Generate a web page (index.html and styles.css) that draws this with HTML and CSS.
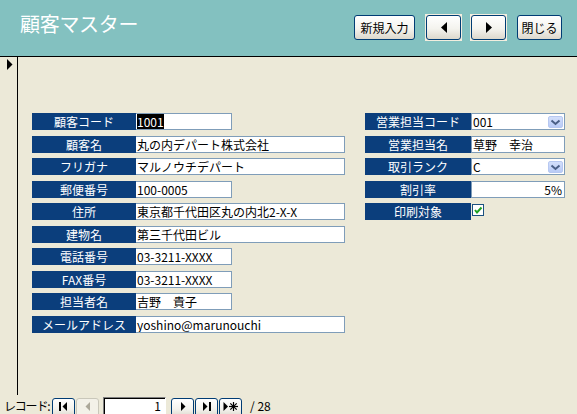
FILE: index.html
```html
<!DOCTYPE html>
<html lang="ja">
<head>
<meta charset="utf-8">
<title>顧客マスター</title>
<link rel="stylesheet" href="styles.css">
</head>
<body>
<div class="window">
  <header class="header">
    <h1 class="title">顧客マスター</h1>
    <div class="actions">
      <button class="btn btn-new">新規入力</button>
      <span class="btn-frame"><button class="btn btn-arrow"><svg width="8" height="11" viewBox="0 0 8 11"><polygon points="7,0 1,5.5 7,11" fill="#000"/></svg></button></span>
      <span class="btn-frame"><button class="btn btn-arrow"><svg width="8" height="11" viewBox="0 0 8 11"><polygon points="1,0 7,5.5 1,11" fill="#000"/></svg></button></span>
      <button class="btn btn-close">閉じる</button>
    </div>
  </header>

  <main class="main">
    <div class="selector">
      <svg class="selector-arrow" width="6" height="11" viewBox="0 0 6 11"><polygon points="0,0 5.5,5.5 0,11" fill="#000"/></svg>
    </div>
    <div class="form">
      <div class="col col-left">
        <div class="row"><span class="label">顧客コード</span><span class="field short"><span class="selected">1001</span></span></div>
        <div class="row"><span class="label">顧客名</span><span class="field long">丸の内デパート株式会社</span></div>
        <div class="row"><span class="label">フリガナ</span><span class="field long">マルノウチデパート</span></div>
        <div class="row"><span class="label">郵便番号</span><span class="field short">100-0005</span></div>
        <div class="row"><span class="label">住所</span><span class="field long">東京都千代田区丸の内北2-X-X</span></div>
        <div class="row"><span class="label">建物名</span><span class="field long">第三千代田ビル</span></div>
        <div class="row"><span class="label">電話番号</span><span class="field short">03-3211-XXXX</span></div>
        <div class="row"><span class="label">FAX番号</span><span class="field short">03-3211-XXXX</span></div>
        <div class="row"><span class="label">担当者名</span><span class="field short">吉野　貴子</span></div>
        <div class="row"><span class="label">メールアドレス</span><span class="field long">yoshino@marunouchi</span></div>
      </div>
      <div class="col col-right">
        <div class="row"><span class="label">営業担当コード</span><span class="field combo"><span class="combo-text">001</span><span class="drop"><svg width="11" height="7" viewBox="0 0 11 7"><polyline points="1.5,1.5 5.5,5 9.5,1.5" fill="none" stroke="#4A5F86" stroke-width="2"/></svg></span></span></div>
        <div class="row"><span class="label">営業担当名</span><span class="field combo">草野　幸治</span></div>
        <div class="row"><span class="label">取引ランク</span><span class="field combo"><span class="combo-text">C</span><span class="drop"><svg width="11" height="7" viewBox="0 0 11 7"><polyline points="1.5,1.5 5.5,5 9.5,1.5" fill="none" stroke="#4A5F86" stroke-width="2"/></svg></span></span></div>
        <div class="row"><span class="label">割引率</span><span class="field combo number">5%</span></div>
        <div class="row"><span class="label">印刷対象</span><span class="checkbox"><svg width="10" height="10" viewBox="0 0 10 10"><polyline points="2,5 4,7.5 8.5,2.5" fill="none" stroke="#21A121" stroke-width="2"/></svg></span></div>
      </div>
    </div>
  </main>

  <footer class="nav">
    <span class="nav-label">レコード:</span>
    <button class="nbtn"><svg width="9" height="9" viewBox="0 0 9 9"><rect x="0" y="0" width="2" height="9" fill="#000"/><polygon points="8,0 3.5,4.5 8,9" fill="#000"/></svg></button>
    <button class="nbtn disabled"><svg width="6" height="9" viewBox="0 0 6 9"><polygon points="5,0 0.5,4.5 5,9" fill="#ACA899"/></svg></button>
    <span class="nav-input">1</span>
    <button class="nbtn"><svg width="6" height="9" viewBox="0 0 6 9"><polygon points="1,0 5.5,4.5 1,9" fill="#000"/></svg></button>
    <button class="nbtn"><svg width="9" height="9" viewBox="0 0 9 9"><polygon points="1,0 5.5,4.5 1,9" fill="#000"/><rect x="7" y="0" width="2" height="9" fill="#000"/></svg></button>
    <button class="nbtn"><svg width="15" height="9" viewBox="0 0 15 9"><polygon points="0.5,0 5,4.5 0.5,9" fill="#000"/><g stroke="#000" stroke-width="1.2"><line x1="10.5" y1="0" x2="10.5" y2="9"/><line x1="6" y1="4.5" x2="15" y2="4.5"/><line x1="7.3" y1="1.3" x2="13.7" y2="7.7"/><line x1="13.7" y1="1.3" x2="7.3" y2="7.7"/></g></svg></button>
    <span class="nav-total">/ 28</span>
  </footer>
</div>
</body>
</html>
```

FILE: styles.css
```css
html, body {
  margin: 0;
  padding: 0;
}

body {
  background: #ECE9D8;
  font-family: "Noto Sans CJK JP", "Noto Sans", sans-serif;
  font-size: 12px;
  color: #000;
  width: 577px;
  height: 414px;
  overflow: hidden;
}

.window {
  display: flex;
  flex-direction: column;
  width: 577px;
  height: 414px;
}

/* Header */
.header {
  height: 56px;
  flex: none;
  background: #83C1C0;
  border-bottom: 1px solid #000;
  display: flex;
  align-items: flex-start;
  padding: 0 15px 0 20px;
}

.title {
  margin: 0;
  padding-top: 10px;
  font-size: 20px;
  font-weight: normal;
  line-height: 28px;
  color: #fff;
  letter-spacing: -0.3px;
}

.actions {
  margin-left: auto;
  display: flex;
  align-items: flex-start;
  gap: 8px;
  padding-top: 15px;
}

.btn {
  height: 25px;
  box-sizing: border-box;
  border: 1px solid #003C74;
  border-radius: 3px;
  background: linear-gradient(#FFFFFF, #F4F3EE 55%, #DCD8CC);
  font-family: inherit;
  font-size: 12px;
  color: #000;
  padding: 0;
  display: flex;
  align-items: center;
  justify-content: center;
  cursor: default;
}

.btn-new { width: 61px; margin-right: 2px; }
.btn-close { width: 45px; margin-left: 2px; }

.btn-frame {
  display: flex;
  padding: 1px;
  margin-top: -1px;
  background: #F3EEDF;
}

.btn-arrow { width: 35px; }

/* Main area */
.main {
  display: flex;
  height: 340px;
  flex: none;
}

.selector {
  width: 17px;
  height: 338px;
  border-right: 1px solid #000;
  flex: none;
}

.selector-arrow {
  display: block;
  margin: 2px 0 0 7px;
}

.form {
  display: flex;
  gap: 20px;
  padding: 56px 0 0 14px;
}

.col {
  display: grid;
  row-gap: 5.5px;
  align-content: start;
}

.row {
  display: flex;
  height: 17px;
}

.label {
  width: 104px;
  flex: none;
  background: #0B3E7C;
  color: #fff;
  text-align: center;
  line-height: 17px;
  white-space: nowrap;
}

.col-right .label { width: 106px; }

.field {
  box-sizing: border-box;
  height: 17px;
  background: #fff;
  border: 1px solid #7F9DB9;
  border-left: none;
  line-height: 15px;
  padding-left: 1px;
  white-space: nowrap;
  overflow: hidden;
}

.short { width: 96px; }
.long { width: 209px; }
.combo {
  width: 94px;
  display: flex;
  align-items: center;
  border-left: 1px solid #7F9DB9;
}

.combo-text { flex: 1; }

.number {
  justify-content: flex-end;
  padding-right: 2px;
}

.selected {
  background: #000;
  color: #fff;
}

.drop {
  width: 15px;
  height: 12px;
  margin: 1px 1px 0 0;
  box-sizing: border-box;
  border: 1px solid #B7C8F1;
  border-radius: 2px;
  background: linear-gradient(#D3DFFB, #B9CBF6);
  display: flex;
  align-items: center;
  justify-content: center;
}

.checkbox {
  width: 12px;
  height: 12px;
  box-sizing: border-box;
  margin: 1px 0 0 1px;
  border: 1px solid #1C5180;
  background: #fff;
  display: flex;
  align-items: center;
  justify-content: center;
}

/* Bottom navigation */
.nav {
  height: 17px;
  flex: none;
  display: flex;
  align-items: flex-start;
  padding-left: 4px;
}

.nav-label {
  line-height: 17px;
  width: 48px;
  flex: none;
  white-space: nowrap;
  letter-spacing: -1.2px;
}

.nbtn {
  width: 23px;
  height: 20px;
  margin-top: 1px;
  margin-right: 1px;
  box-sizing: border-box;
  border: 1px solid #003C74;
  border-radius: 3px;
  background: linear-gradient(#FFFFFF, #F4F3EE 55%, #DCD8CC);
  padding: 0 0 3px 0;
  display: flex;
  align-items: center;
  justify-content: center;
}

.nbtn.disabled {
  border-color: #C9C7BA;
  background: #F3F1E8;
}

.nav-input {
  box-sizing: border-box;
  width: 63px;
  height: 20px;
  margin: 0 5px 0 3px;
  background: #fff;
  border: 1px solid;
  border-color: #808080 #fff #fff #808080;
  box-shadow: inset 1px 1px 0 #000;
  text-align: right;
  padding-right: 4px;
  line-height: 16px;
}

.nav-total {
  margin-left: 7px;
  line-height: 17px;
}
```
